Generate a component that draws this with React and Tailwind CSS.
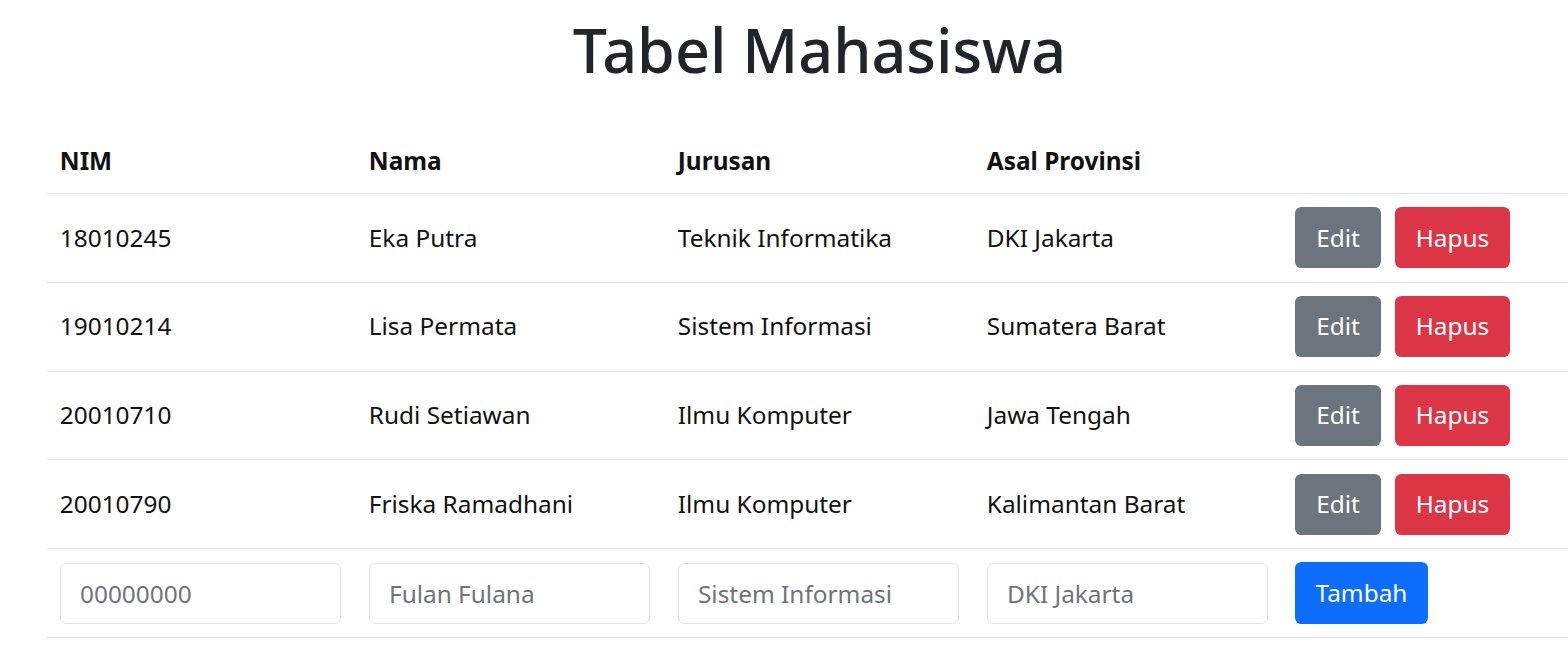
import React from "react";

const rows = [
  ["18010245", "Eka Putra", "Teknik Informatika", "DKI Jakarta"],
  ["19010214", "Lisa Permata", "Sistem Informasi", "Sumatera Barat"],
  ["20010710", "Rudi Setiawan", "Ilmu Komputer", "Jawa Tengah"],
  ["20010790", "Friska Ramadhani", "Ilmu Komputer", "Kalimantan Barat"],
];

const font = { fontFamily: '"Noto Sans", "Open Sans", sans-serif' };

export default function App() {
  return (
    <div className="w-[1568px] h-[672px] overflow-hidden bg-white" style={font}>
      <div className="ml-[47px] w-[1545px]">
        <h1 className="mt-[12px] h-[77px] text-center text-[61px] leading-[76.8px] font-medium text-[#212529]">
          Tabel Mahasiswa
        </h1>
        <div className="mt-[40px] text-[24.4px] text-[#111]">
          <div className="grid grid-cols-5 h-[65px] border-b border-[#dee2e6] items-center font-bold">
            <div className="px-[12.8px]">NIM</div>
            <div className="px-[12.8px]">Nama</div>
            <div className="px-[12.8px]">Jurusan</div>
            <div className="px-[12.8px]">Asal Provinsi</div>
            <div className="px-[12px]"></div>
          </div>
          {rows.map((r) => (
            <div key={r[0]} className="grid grid-cols-5 h-[88.8px] border-b border-[#dee2e6] items-center">
              {r.map((c, i) => (
                <div key={i} className="px-[12.8px]">{c}</div>
              ))}
              <div className="px-[12px] flex gap-[14px]">
                <button className="h-[61px] w-[86px] rounded-[6.4px] bg-[#6c757d] text-white">Edit</button>
                <button className="h-[61px] w-[115px] rounded-[6.4px] bg-[#dc3545] text-white">Hapus</button>
              </div>
            </div>
          ))}
          <div className="grid grid-cols-5 h-[88.8px] border-b border-[#dee2e6] items-center">
            {["00000000", "Fulan Fulana", "Sistem Informasi", "DKI Jakarta"].map((p) => (
              <div key={p} className="px-[12.8px]">
                <input
                  placeholder={p}
                  className="w-[281px] h-[61px] px-[19.2px] rounded-[6.4px] border border-[#dee2e6] bg-white text-[24.4px] placeholder:text-[#6c757d] outline-none"
                  style={font}
                />
              </div>
            ))}
            <div className="px-[12px]">
              <button className="h-[62px] w-[133px] rounded-[6.4px] bg-[#0d6efd] text-white">Tambah</button>
            </div>
          </div>
        </div>
      </div>
    </div>
  );
}
